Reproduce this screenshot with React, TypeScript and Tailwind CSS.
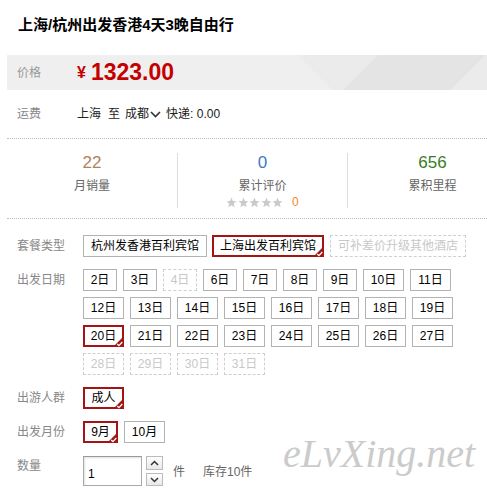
import React from "react";

const FIRST_ROW = ["2日", "3日", "4日", "6日", "7日", "8日", "9日", "10日", "11日"];
const MORE_DAYS = [12, 13, 14, 15, 16, 17, 18, 19, 20, 21, 22, 23, 24, 25, 26, 27].map((d) => `${d}日`);
const GONE_DAYS = ["28日", "29日", "30日", "31日"];

function Check() {
  return (
    <svg width="11" height="11" viewBox="0 0 11 11" className="absolute -bottom-[2px] -right-[2px]">
      <polygon points="11,0 11,11 0,11" fill="#a31515" />
      <path d="M4.2 8 L5.9 9.6 L9.3 6" stroke="#fff" strokeWidth="1.3" fill="none" />
    </svg>
  );
}

function Chip({ label, width, state = "normal" }: { label: string; width?: string; state?: "normal" | "on" | "off" }) {
  const base = "relative flex h-[22px] shrink-0 items-center justify-center box-border";
  const look =
    state === "on"
      ? "border-2 border-[#a31515] text-black"
      : state === "off"
      ? "border border-dashed border-[#cfcfcf] text-[#c8c8c8]"
      : "border border-[#b3b3b3] text-black";
  return (
    <div className={`${base} ${look} ${width ?? ""}`}>
      {label}
      {state === "on" && <Check />}
    </div>
  );
}

function Star() {
  return (
    <svg width="11" height="11" viewBox="0 0 11 11">
      <polygon
        points="5.5,0.5 6.9,4 10.5,4.2 7.7,6.6 8.7,10.3 5.5,8.2 2.3,10.3 3.3,6.6 0.5,4.2 4.1,4"
        fill="#cacaca"
      />
    </svg>
  );
}

export default function App() {
  return (
    <div className="relative h-[492px] w-[487px] overflow-hidden bg-white text-[12px] text-[#222] font-['Liberation_Sans','Noto_Sans_CJK_SC',sans-serif]">
      <h1 className="h-[55px] pl-[18px] pt-[15px] text-[15px] font-bold leading-[20px] text-black">
        上海/杭州出发香港4天3晚自由行
      </h1>

      <div className="ml-[7px] w-[510px]">
        {/* price */}
        <div className="flex h-[35px] items-center bg-[#ebebeb] bg-[linear-gradient(135deg,transparent_262px,#e4e4e4_262px,#e4e4e4_338px,transparent_338px),linear-gradient(45deg,#efefef_230px,transparent_230px)]">
          <span className="w-[70px] pl-[10px] text-[#999]">价格</span>
          <span className="text-[16px] font-bold text-[#c40000]">¥</span>
          <span className="ml-[5px] text-[23px] font-bold leading-none text-[#c40000]">1323.00</span>
        </div>

        {/* shipping */}
        <div className="flex h-[48px] items-center">
          <span className="w-[70px] pl-[10px] text-[#888]">运费</span>
          <span>上海</span>
          <span className="ml-[7px]">至</span>
          <span className="ml-[5px]">成都</span>
          <svg width="11" height="7" viewBox="0 0 11 7" className="ml-[1px]">
            <path d="M1 1 L5.5 5.5 L10 1" stroke="#333" strokeWidth="1.6" fill="none" />
          </svg>
          <span className="ml-[5px]">快递: 0.00</span>
        </div>

        {/* stats */}
        <div className="flex border-y border-dotted border-[#bbb] pb-[10px] pt-[14px]">
          <div className="flex h-[55px] w-[170px] flex-col items-center">
            <span className="text-[17px] leading-[20px] text-[#b0825a]">22</span>
            <span className="mt-[3px] leading-[20px] text-[#666]">月销量</span>
          </div>
          <div className="flex h-[55px] w-[170px] flex-col items-center border-l border-[#ddd]">
            <span className="text-[17px] leading-[20px] text-[#3c7cbf]">0</span>
            <span className="mt-[3px] leading-[20px] text-[#666]">累计评价</span>
            <div className="flex h-[12px] items-center gap-[0.5px]">
              <Star />
              <Star />
              <Star />
              <Star />
              <Star />
              <span className="ml-[8px] text-[#f08a24]">0</span>
            </div>
          </div>
          <div className="flex h-[55px] w-[170px] flex-col items-center border-l border-[#ddd]">
            <span className="text-[17px] leading-[20px] text-[#3a7d21]">656</span>
            <span className="mt-[3px] leading-[20px] text-[#666]">累积里程</span>
          </div>
        </div>

        {/* options */}
        <div className="flex flex-col gap-[12px] pl-[10px] pt-[16px]">
          <div className="flex">
            <span className="w-[66px] leading-[22px] text-[#888]">套餐类型</span>
            <div className="flex gap-[5px]">
              <div className="flex h-[22px] items-center border border-[#b3b3b3] px-[7px] text-black">杭州发香港百利宾馆</div>
              <div className="relative flex h-[22px] items-center border-2 border-[#a31515] px-[6px] text-black">
                上海出发百利宾馆
                <Check />
              </div>
              <div className="ml-[1px] flex h-[22px] items-center border border-dashed border-[#cfcfcf] px-[7px] text-[#c8c8c8]">
                可补差价升级其他酒店
              </div>
            </div>
          </div>

          <div className="flex">
            <span className="w-[66px] leading-[22px] text-[#888]">出发日期</span>
            <div className="flex w-[372px] flex-wrap gap-[6px]">
              {FIRST_ROW.map((d) => (
                <Chip key={d} label={d} width={d.length > 2 ? "w-[41px]" : "w-[34px]"} state={d === "4日" ? "off" : "normal"} />
              ))}
              {MORE_DAYS.map((d) => (
                <Chip key={d} label={d} width="w-[41px]" state={d === "20日" ? "on" : "normal"} />
              ))}
              {GONE_DAYS.map((d) => (
                <Chip key={d} label={d} width="w-[41px]" state="off" />
              ))}
            </div>
          </div>

          <div className="flex">
            <span className="w-[66px] leading-[22px] text-[#888]">出游人群</span>
            <Chip label="成人" width="w-[41px]" state="on" />
          </div>

          <div className="flex">
            <span className="w-[66px] leading-[22px] text-[#888]">出发月份</span>
            <div className="flex gap-[6px]">
              <Chip label="9月" width="w-[35px]" state="on" />
              <Chip label="10月" width="w-[41px]" />
            </div>
          </div>

          <div className="mt-[1px] flex items-start">
            <span className="w-[66px] leading-[20px] text-[#888]">数量</span>
            <div className="flex h-[30px] w-[59px] items-center border border-[#aaa] border-t-[#999] pl-[4px] pt-[5px] shadow-[inset_1px_1px_2px_rgba(0,0,0,0.12)] text-black">
              1
            </div>
            <div className="ml-[4px] flex flex-col gap-[3px]">
              <div className="flex h-[14px] w-[17px] items-center justify-center border border-[#bbb] bg-[linear-gradient(#fff,#e8e8e8)]">
                <svg width="9" height="6" viewBox="0 0 9 6">
                  <path d="M1 5 L4.5 1.5 L8 5" stroke="#333" strokeWidth="1.5" fill="none" />
                </svg>
              </div>
              <div className="flex h-[13px] w-[17px] items-center justify-center border border-[#bbb] bg-[linear-gradient(#fff,#e8e8e8)]">
                <svg width="9" height="6" viewBox="0 0 9 6">
                  <path d="M1 1 L4.5 4.5 L8 1" stroke="#333" strokeWidth="1.5" fill="none" />
                </svg>
              </div>
            </div>
            <div className="flex h-[30px] items-center pt-[2px] text-[#666]">
              <span className="ml-[10px]">件</span>
              <span className="ml-[18px]">库存10件</span>
            </div>
          </div>
        </div>
      </div>

      <div className="absolute left-[283px] top-[430px] font-['Liberation_Serif',serif] text-[40px] italic leading-[48px] text-[#cbcbcb]">
        eLvXing.net
      </div>
    </div>
  );
}
